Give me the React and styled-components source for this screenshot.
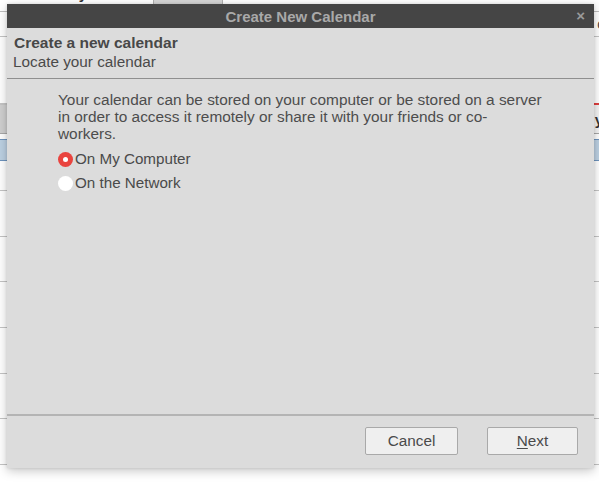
import React from "react";
import styled, { createGlobalStyle } from "styled-components";

const Global = createGlobalStyle`
  html, body { margin: 0; padding: 0; background: #ffffff; }
  body { font-family: "Liberation Sans", Arial, sans-serif; }
  * { box-sizing: border-box; }
`;

const Stage = styled.div`
  position: relative;
  width: 599px;
  height: 484px;
  overflow: hidden;
  background: #ffffff;
`;

/* ---------- background application (mostly hidden by the dialog) ---------- */
const Backdrop = styled.div`
  display: flex;
  flex-direction: column;
  width: 100%;
  height: 100%;
`;

const TopBar = styled.div`
  height: 12px;
  border-bottom: 1px solid #bdbdbd;
  display: flex;
  align-items: flex-end;
`;

const TopLabel = styled.div`
  font-size: 15px;
  font-weight: bold;
  color: #333;
  margin-top: -16px;
  line-height: 20px;
  width: 155px;
  align-self: flex-start;
  margin-left: -2px;
`;

const TopTab = styled.div`
  width: 70px;
  height: 5px;
  align-self: flex-start;
  background: #d6d6d6;
  border: 1px solid #b0b0b0;
  border-top: none;
`;

const SubRow = styled.div`
  height: 25px;
  border-bottom: 1px solid #c4c4c4;
  display: flex;
  justify-content: flex-end;
  align-items: center;
  font-size: 14px;
  color: #444;
  margin-right: -6px;
`;

const Gap = styled.div`
  height: ${p => p.$h}px;
`;

const HeadRow = styled.div`
  height: 31px;
  display: flex;
`;

const HeadCell = styled.div`
  flex: ${p => (p.$grow ? 1 : "0 0 150px")};
  background: ${p => (p.$grow ? "#f4f4f4" : "#cfcfcf")};
  border-top: 2px solid ${p => (p.$grow ? "#e04040" : "#c4c4c4")};
  border-bottom: 1px solid #a8a8a8;
  display: flex;
  justify-content: flex-end;
  align-items: center;
  font-size: 15px;
  font-weight: bold;
  color: #333;
  margin-right: ${p => (p.$grow ? "-4px" : "0")};
`;

const SelectedRow = styled.div`
  margin-top: 5px;
  height: 22px;
  background: #bcd0e2;
  border-top: 1px solid #6d93bd;
  border-bottom: 1px solid #6d93bd;
`;

const CalRow = styled.div`
  flex: 0 0 ${p => p.$h}px;
  border-bottom: 1px solid #c4c4c4;
`;

/* ---------- dialog ---------- */
const Dialog = styled.div`
  position: absolute;
  left: 7px;
  top: 4px;
  width: 587px;
  height: 464px;
  display: flex;
  flex-direction: column;
  background: #dcdcdc;
  box-shadow: 0 3px 10px rgba(0, 0, 0, 0.22), 0 0 3px rgba(0, 0, 0, 0.12);
  color: #4a4a4a;
  font-size: 15px;
`;

const TitleBar = styled.div`
  height: 24px;
  flex: 0 0 24px;
  background: #454545;
  display: flex;
  align-items: center;
  justify-content: center;
  position: relative;
  font-weight: bold;
  font-size: 15px;
  color: #a9a9a9;
`;

const CloseGlyph = styled.span`
  position: absolute;
  right: 9px;
  top: 3px;
  font-size: 15px;
  font-weight: bold;
  color: #9a9a9a;
`;

const Header = styled.div`
  flex: 0 0 51px;
  padding: 5px 7px 0;
  border-bottom: 1px solid #8f8f8f;
  display: flex;
  flex-direction: column;
  line-height: 19px;
  font-size: 15.3px;
`;

const HeaderTitle = styled.div`
  font-weight: bold;
  font-size: 15.5px;
  color: #484848;
`;

const HeaderSub = styled.div`
  color: #4a4a4a;
  margin-left: -1px;
`;

const Body = styled.div`
  flex: 1;
  padding: 12px 0 0 51px;
  display: flex;
  flex-direction: column;
`;

const Para = styled.p`
  margin: 0 0 5px;
  line-height: 17px;
  font-size: 15.4px;
  color: #4d4d4d;
`;

const Choice = styled.label`
  display: flex;
  align-items: center;
  gap: 2px;
  height: 24px;
  line-height: 24px;
  font-size: 15.2px;
  color: #4a4a4a;
`;

const Radio = styled.span`
  width: 15px;
  height: 15px;
  border-radius: 50%;
  background: ${p => (p.$on ? "#e9443f" : "#ffffff")};
  display: flex;
  align-items: center;
  justify-content: center;
  &::after {
    content: "";
    width: 5px;
    height: 5px;
    border-radius: 50%;
    background: #ffffff;
    display: ${p => (p.$on ? "block" : "none")};
  }
`;

const Footer = styled.div`
  flex: 0 0 54px;
  border-top: 2px solid #b4b4b4;
  display: flex;
  justify-content: flex-end;
  align-items: flex-start;
  gap: 29px;
  padding: 11px 16px 0 0;
`;

const Button = styled.button`
  width: ${p => p.$w}px;
  height: 28px;
  background: #efefef;
  border: 1px solid #a9a9a9;
  border-radius: 2px;
  font-family: "Liberation Sans", Arial, sans-serif;
  font-size: 15.3px;
  color: #4a4a4a;
  padding: 0;
  u { text-decoration-thickness: 1px; text-underline-offset: 2px; }
`;

export default function App() {
  return (
    <Stage>
      <Global />
      <Backdrop>
        <TopBar>
          <TopLabel>e Next 7 Days</TopLabel>
          <TopTab />
        </TopBar>
        <SubRow>o</SubRow>
        <Gap $h={66} />
        <HeadRow>
          <HeadCell />
          <HeadCell $grow>y</HeadCell>
        </HeadRow>
        <SelectedRow />
        <CalRow $h={30} />
        <CalRow $h={46} />
        <CalRow $h={45} />
        <CalRow $h={46} />
        <CalRow $h={46} />
        <CalRow $h={45} />
        <CalRow $h={46} />
      </Backdrop>

      <Dialog role="dialog" aria-label="Create New Calendar">
        <TitleBar>
          Create New Calendar
          <CloseGlyph>×</CloseGlyph>
        </TitleBar>
        <Header>
          <HeaderTitle>Create a new calendar</HeaderTitle>
          <HeaderSub>Locate your calendar</HeaderSub>
        </Header>
        <Body>
          <Para>
            Your calendar can be stored on your computer or be stored on a server
            <br />
            in order to access it remotely or share it with your friends or co-
            <br />
            workers.
          </Para>
          <Choice>
            <Radio $on />
            On My Computer
          </Choice>
          <Choice>
            <Radio />
            On the Network
          </Choice>
        </Body>
        <Footer>
          <Button $w={93}>Cancel</Button>
          <Button $w={91}>
            <u>N</u>ext
          </Button>
        </Footer>
      </Dialog>
    </Stage>
  );
}
